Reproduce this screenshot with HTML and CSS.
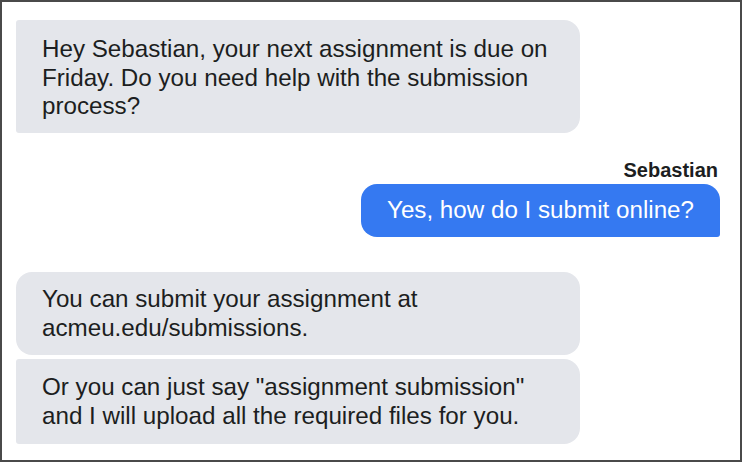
FILE: index.html
```html
<!DOCTYPE html>
<html>
<head>
<meta charset="utf-8">
<link rel="stylesheet" href="styles.css">
</head>
<body>
<div class="chat">
  <div class="row left">
    <div class="bubble bot first intro">Hey Sebastian, your next assignment is due on Friday. Do you need help with the submission process?</div>
  </div>
  <div class="row right">
    <div class="name">Sebastian</div>
    <div class="bubble user">Yes, how do I submit online?</div>
  </div>
  <div class="row left group">
    <div class="bubble bot round">You can submit your assignment at acmeu.edu/submissions.</div>
    <div class="bubble bot first">Or you can just say "assignment submission" and I will upload all the required files for you.</div>
  </div>
</div>
</body>
</html>
```

FILE: styles.css
```css
* { box-sizing: border-box; }
html, body { margin: 0; padding: 0; background: #fff; }
body { font-family: "Liberation Sans", Arial, Helvetica, sans-serif; }
.chat {
  width: 742px;
  height: 462px;
  border: 2px solid #4a4a4a;
  padding: 18px 20px 14px 14px;
  display: flex;
  flex-direction: column;
}
.row { display: flex; flex-direction: column; }
.row.left { align-items: flex-start; }
.row.right { align-items: flex-end; margin-top: 26px; }
.row.group { margin-top: 35px; gap: 4px; }
.name {
  font-weight: bold;
  font-size: 20px;
  line-height: 22px;
  color: #1c1e21;
  margin-bottom: 3px;
  margin-right: 2px;
}
.bubble {
  font-size: 24.2px;
  line-height: 28.5px;
  padding: 14px 26px 14px 26px;
}
.bot {
  width: 564px;
  background: #e4e6eb;
  color: #1c1e21;
}
.bot.first { border-radius: 3px 16px 16px 3px; }
.bot.intro { padding-top: 15px; padding-bottom: 12px; }
.bot.round { border-radius: 16px; padding-top: 13px; padding-bottom: 13px; }
.user {
  background: #3579f1;
  color: #fff;
  border-radius: 16px 16px 3px 16px;
  padding: 12px 26px 13px 26px;
}
```
